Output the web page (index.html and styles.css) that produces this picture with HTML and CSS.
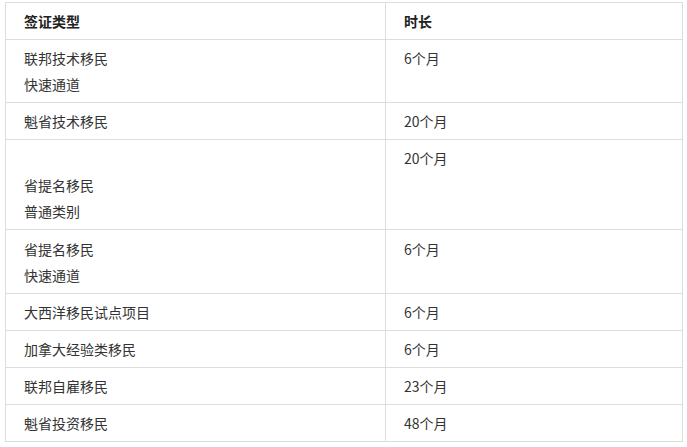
FILE: index.html
```html
<!DOCTYPE html>
<html lang="zh">
<head>
<meta charset="utf-8">
<link rel="stylesheet" href="styles.css">
</head>
<body>
<div class="wrap">
<table class="visa">
  <colgroup><col class="c1"><col class="c2"></colgroup>
  <thead>
    <tr><th>签证类型</th><th>时长</th></tr>
  </thead>
  <tbody>
    <tr><td>联邦技术移民<br>快速通道</td><td>6个月</td></tr>
    <tr><td>魁省技术移民</td><td>20个月</td></tr>
    <tr><td><span class="blank"></span>省提名移民<br>普通类别</td><td>20个月</td></tr>
    <tr class="tall"><td>省提名移民<br>快速通道</td><td>6个月</td></tr>
    <tr><td>大西洋移民试点项目</td><td>6个月</td></tr>
    <tr><td>加拿大经验类移民</td><td>6个月</td></tr>
    <tr><td>联邦自雇移民</td><td>23个月</td></tr>
    <tr><td>魁省投资移民</td><td>48个月</td></tr>
  </tbody>
</table>
</div>
</body>
</html>
```
FILE: styles.css
```css
html, body {
  margin: 0;
  padding: 0;
  background: #fff;
}
.wrap {
  padding: 2px 5px 0 5px;
}
.visa {
  border-collapse: collapse;
  table-layout: fixed;
  width: 677px;
  font-family: "Microsoft YaHei", "Noto Sans CJK SC", "Noto Sans", sans-serif;
  font-size: 14px;
  line-height: 26px;
  color: #333;
}
.c1 { width: 380px; }
.c2 { width: 297px; }
.visa th,
.visa td {
  border: 1px solid #dddddd;
  padding: 5px 18px;
  text-align: left;
  vertical-align: top;
}
.visa th {
  font-weight: bold;
  color: #222;
}
.visa .blank {
  display: block;
  height: 27px;
}
.visa .tall td {
  padding-top: 6px;
}
```
